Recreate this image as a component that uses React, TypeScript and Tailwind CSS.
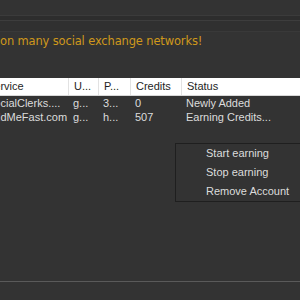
const rows = [
  { service: "SocialClerks....", user: "g...", pass: "3...", credits: "0", status: "Newly Added" },
  { service: "AddMeFast.com", user: "g...", pass: "h...", credits: "507", status: "Earning Credits..." },
];

const App = () => {
  return (
    <div className="w-[300px] h-[300px] overflow-hidden bg-[#333333] relative font-['Liberation_Sans',sans-serif]">
      {/* top toolbar edges */}
      <div className="h-[15px]" />
      <div className="h-px bg-[#3b3b3b]" />
      <div className="h-[4px] bg-[#2d2d2d]" />
      <div className="h-px bg-[#3d3d3d]" />
      <div className="h-[10px] bg-[#303030]" />
      <div className="h-px bg-[#393939]" />

      {/* status message */}
      <div className="h-[46px] whitespace-nowrap leading-[16px]">
        <span className="text-[11.5px] text-[#cf981b] font-['DejaVu_Sans',sans-serif] tracking-[-0.15px]">
          on many social exchange networks!
        </span>
      </div>

      {/* accounts table */}
      <div className="ml-[-18px] w-[340px] text-[11px] whitespace-nowrap">
        <div className="flex h-[18px] bg-white text-[#1e1e1e] items-center border-b border-[#d8d8d8]">
          <div className="w-[86px] pl-[5px]">Service</div>
          <div className="w-[30px] pl-[5px] border-l border-[#e2e2e2] h-full flex items-center">U...</div>
          <div className="w-[32px] pl-[5px] border-l border-[#e2e2e2] h-full flex items-center">P...</div>
          <div className="w-[51px] pl-[5px] border-l border-[#e2e2e2] h-full flex items-center">Credits</div>
          <div className="flex-1 pl-[5px] border-l border-[#e2e2e2] h-full flex items-center">Status</div>
        </div>
        {rows.map((r) => (
          <div key={r.service} className="flex h-[14px] items-center text-[#dcdcdc]">
            <div className="w-[86px] pl-[5px] overflow-hidden">{r.service}</div>
            <div className="w-[30px] pl-[5px]">{r.user}</div>
            <div className="w-[32px] pl-[5px]">{r.pass}</div>
            <div className="w-[51px] pl-[5px]">{r.credits}</div>
            <div className="flex-1 pl-[5px]">{r.status}</div>
          </div>
        ))}
      </div>

      {/* context menu */}
      <div className="absolute left-[175px] top-[143px] w-[140px] border border-[#1f1f1f] bg-[#333333] text-[11px] text-[#dcdcdc] whitespace-nowrap">
        <div className="h-[19px] flex items-center pl-[30px]">Start earning</div>
        <div className="h-[19px] flex items-center pl-[30px]">Stop earning</div>
        <div className="h-[19px] flex items-center pl-[30px]">Remove Account</div>
      </div>

      {/* bottom separator */}
      <div className="absolute left-0 right-0 top-[281px] h-px bg-[#5a5a5a]" />
    </div>
  );
};

export default App;
